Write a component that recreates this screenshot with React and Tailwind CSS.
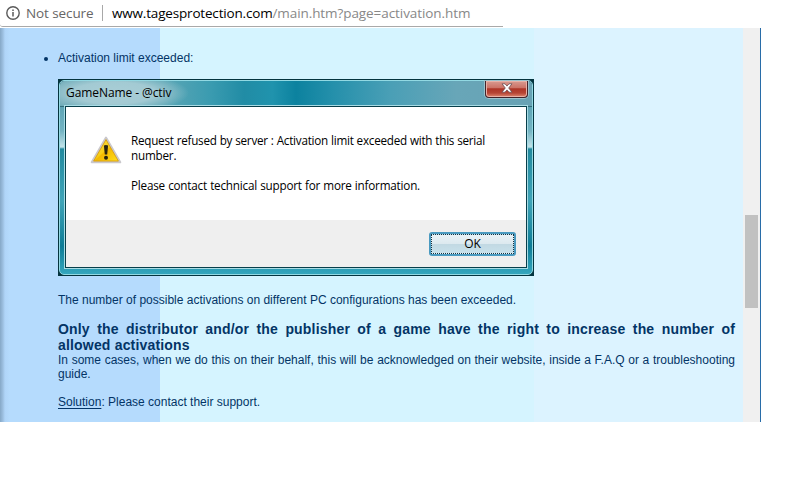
const sans = "font-['Liberation_Sans',Arial,sans-serif]";
const ui = "font-['Open_Sans','Noto_Sans',sans-serif]";

function InfoIcon() {
  return (
    <svg className="ml-[6px] h-[14px] w-[14px] shrink-0" viewBox="0 0 14 14" fill="none">
      <circle cx="7" cy="7" r="6.2" stroke="#5a5a5a" strokeWidth="1.4" />
      <path d="M7 6v4.5M7 3.4v1.5" stroke="#5a5a5a" strokeWidth="1.5" />
    </svg>
  );
}

function WarningIcon() {
  return (
    <svg className="h-[28px] w-[32px] shrink-0" viewBox="0 0 32 28">
      <defs>
        <linearGradient id="warn" x1="0" y1="0" x2="1" y2="1">
          <stop offset="0" stopColor="#f7dc55" />
          <stop offset=".48" stopColor="#f8cf16" />
          <stop offset=".52" stopColor="#f5b900" />
          <stop offset="1" stopColor="#ffdf1c" />
        </linearGradient>
      </defs>
      <path d="M16 1.5 30.3 26.3H1.7Z" fill="#dedcd7" stroke="#cac8cc" strokeWidth="2" strokeLinejoin="round" />
      <path d="M16 3.6 28.4 25.1H3.6Z" fill="url(#warn)" stroke="#d69c13" strokeWidth=".9" strokeLinejoin="round" />
      <path d="M13.9 9.5q2-1.1 4.2 0l-.9 9h-2.4Z" fill="#29240f" />
      <circle cx="16" cy="21.8" r="2" fill="#29240f" />
    </svg>
  );
}

function AddressBar() {
  return (
    <header className={`flex h-[27px] w-[503px] items-center rounded-bl-[3px] border-b border-[#a9a9a9] bg-white text-[14px] leading-[26px] ${ui}`}>
      <InfoIcon />
      <span className="ml-[6px] w-[67px] whitespace-nowrap text-[13.5px] tracking-[-0.1px] text-[#666] [text-align-last:justify]">Not secure</span>
      <span className="ml-[9px] h-4 w-px bg-[#a8a8a8]" />
      <span className="ml-[9px] whitespace-nowrap text-[13.5px] tracking-[-0.08px] text-[#888]">
        <span className="tracking-[-0.18px] text-black">www.tagesprotection.com</span>/main.htm?page=activation.htm
      </span>
    </header>
  );
}

function CloseButton() {
  return (
    <div className="flex h-[17px] w-[43px] items-center justify-center rounded-b-[4px] border border-t-0 border-[#42232a] bg-[linear-gradient(#d99b91_0%,#cb7165_44%,#ad3426_48%,#b64434_75%,#df8871_100%)] shadow-[inset_0_0_0_1px_#e8b0a6,0_0_0_1px_#9bc3cd]">
      <svg className="h-[10px] w-[12px] -translate-y-px" viewBox="0 0 12 10">
        <path d="M1 .8h3l2 2.3L8 .8h3L7.7 5 11 9.2H8L6 6.9 4 9.2H1L4.3 5Z" fill="#fff" stroke="#6c4b50" strokeWidth=".8" />
      </svg>
    </div>
  );
}

function Dialog() {
  return (
    <section className={`flex h-[197px] w-[476px] flex-col bg-[#04343f] p-px text-black ${ui}`}>
      <div className="flex min-h-0 flex-1 flex-col rounded-[5px] border border-[#92d9e3] bg-[linear-gradient(180deg,transparent_25px,#5ea5b6_26px,#74b4c3_50px,#c2e3e9_66px,#218a9f_68px,#3fa4b8_120px,#0d7c96_165px,#35a6bd_100%)] px-[5px] pb-[6px]">
        <div className="-mx-[5px] flex h-[25px] shrink-0 justify-between rounded-t-[4px] bg-[radial-gradient(ellipse_75px_20px_at_54px_12px,#a9ced6_0%,#a3cad3_55%,transparent_100%),linear-gradient(90deg,#69a7b5_0%,#5ba6b5_22%,#3a9bb0_32%,#218ca5_39%,#2093ad_45%,#0c829f_50%,#2590ab_58%,#4a9fb6_70%,#68a6b8_84%,#68a2b4_100%)] pl-[6px] pr-[4px]">
          <span className="mt-[2px] h-5 w-[105px] whitespace-nowrap text-[12px] leading-5 tracking-[-0.08px] [text-align-last:justify]">GameName - @ctiv</span>
          <CloseButton />
        </div>
        <div className="flex min-h-0 flex-1 flex-col border border-[#083f4b] bg-white outline outline-[#a8dce5]">
          <div className="flex h-[113px] shrink-0 pl-[24px]">
            <div className="pt-[29px]"><WarningIcon /></div>
            <div className="ml-[9px] mt-[26px] text-[11.7px] leading-[15px] tracking-[-0.2px]">
              <p className="w-[354px] whitespace-nowrap tracking-[-0.25px] [text-align-last:justify]">Request refused by server : Activation limit exceeded with this serial</p>
              <p>number.</p>
              <p className="mt-[15px] w-[289px] whitespace-nowrap [text-align-last:justify]">Please contact technical support for more information.</p>
            </div>
          </div>
          <div className="flex min-h-0 flex-1 justify-end bg-[#efefef] pr-[10px] pt-[12px]">
            <button className="h-6 w-[87px] rounded-[3px] border-2 border-[#4a9ac0] bg-[#bcebf8] text-[12px]">
              <span className="flex h-full items-center justify-center border border-dotted border-[#173340] bg-[linear-gradient(#e9f2f6_0%,#dce9ef_48%,#c2d9e3_52%,#c8e1eb_100%)] leading-none">OK</span>
            </button>
          </div>
        </div>
      </div>
    </section>
  );
}

function Content() {
  return (
    <main className={`w-[743px] bg-[linear-gradient(90deg,#86a8c7_0px,#9dc0e1_3px,#b0d5f8_5px,#b5dbfd_10px,#b5dbfd_160px,#d5f4ff_160px,#d5f4ff_534px,#dcf3ff_534px)] pl-[58px] pt-[23px] text-[12px] leading-[14px] text-[#033466] ${sans}`}>
      <div className="-ml-[14px] flex items-center">
        <span className="mr-[10px] mt-px h-1 w-1 rounded-full bg-[#033466]" />
        <p>Activation limit exceeded:</p>
      </div>
      <div className="mt-[14px]"><Dialog /></div>
      <p className="mt-[17px] w-[458px] whitespace-nowrap [text-align-last:justify]">The number of possible activations on different PC configurations has been exceeded.</p>
      <h1 className="mt-[14px] w-[677px] text-justify text-[14px] font-bold leading-4 tracking-[0.18px]">Only the distributor and/or the publisher of a game have the right to increase the number of allowed activations</h1>
      <p className="w-[677px] text-justify">In some cases, when we do this on their behalf, this will be acknowledged on their website, inside a F.A.Q or a troubleshooting guide.</p>
      <p className="mt-[14px]"><span className="underline underline-offset-2">Solution</span>: Please contact their support.</p>
    </main>
  );
}

export default function App() {
  return (
    <div className="h-[480px] w-[790px] overflow-hidden bg-white">
      <AddressBar />
      <div className="mt-px flex h-[394px] w-[761px] border-r border-[#286ca8]">
        <Content />
        <aside className="w-[17px] bg-[#f0f0f0] pl-[2px] pr-[2px] pt-[187px]">
          <div className="h-[93px] bg-[#c1c1c1]" />
        </aside>
      </div>
    </div>
  );
}
